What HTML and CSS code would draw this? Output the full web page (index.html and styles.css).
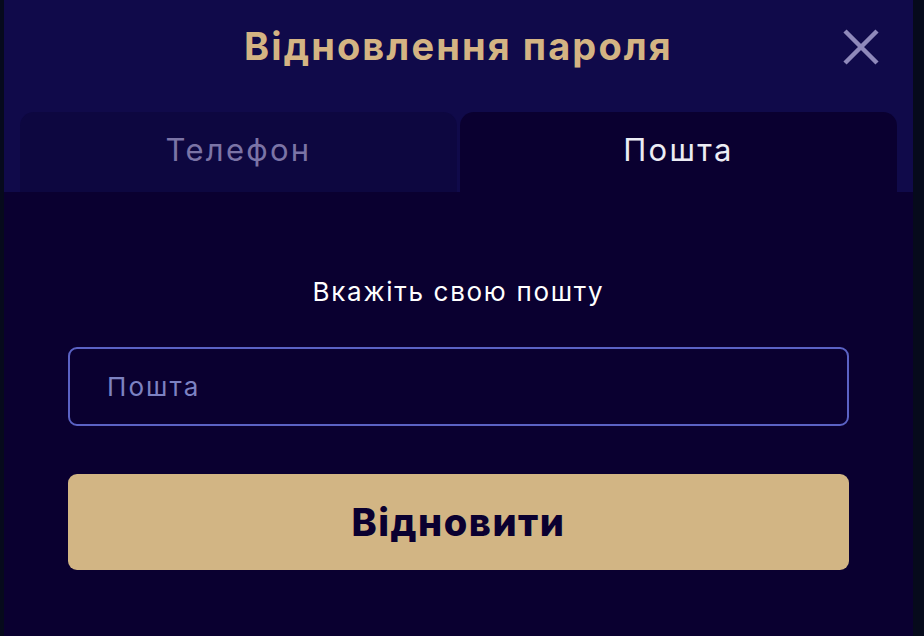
FILE: index.html
```html
<!DOCTYPE html>
<html lang="uk">
<head>
<meta charset="utf-8">
<link rel="stylesheet" href="styles.css">
</head>
<body>
<div class="page">
  <div class="modal">
    <div class="head">
      <div class="title-row">
        <h1 class="title">Відновлення пароля</h1>
        <button class="close" aria-label="close">
          <svg width="36" height="36" viewBox="0 0 36 36"><path d="M2 2 L34 34 M34 2 L2 34" stroke="#8f89ba" stroke-width="4.5" stroke-linecap="butt"/></svg>
        </button>
      </div>
      <div class="tabs">
        <div class="tab">Телефон</div>
        <div class="tab active">Пошта</div>
      </div>
    </div>
    <div class="body">
      <p class="hint">Вкажіть свою пошту</p>
      <div class="input"><span class="placeholder">Пошта</span></div>
      <button class="submit">Відновити</button>
    </div>
  </div>
</div>
</body>
</html>
```
FILE: styles.css
```css
* { box-sizing: border-box; }
html, body { margin: 0; padding: 0; }
body {
  background: #060a1c;
  font-family: Inter, "Noto Sans", sans-serif;
  width: 924px;
  height: 636px;
  overflow: hidden;
}
.page {
  padding-left: 4px;
  height: 636px;
}
.modal {
  width: 909px;
  height: 636px;
  display: flex;
  flex-direction: column;
}
.head {
  background: #100a4a;
  padding: 0 16px;
}
.title-row {
  height: 112px;
  padding-bottom: 20px;
  display: flex;
  align-items: center;
  justify-content: center;
  position: relative;
}
.title {
  margin: 0;
  font-size: 38px;
  font-weight: 700;
  color: #d4b483;
  letter-spacing: 2.1px;
}
.close {
  position: absolute;
  right: 18px;
  top: 29px;
  width: 36px;
  height: 36px;
  padding: 0;
  border: 0;
  background: none;
}
.close svg { display: block; }
.tabs {
  display: flex;
  gap: 3px;
  height: 80px;
}
.tab {
  flex: 1;
  background: #0d0740;
  border-radius: 14px 14px 0 0;
  display: flex;
  align-items: center;
  justify-content: center;
  padding-bottom: 6px;
  font-size: 31px;
  letter-spacing: 2.3px;
  color: #7b74a6;
}
.tab.active {
  background: #0a0030;
  color: #ececf4;
}
.body {
  flex: 1;
  background: #0a0030;
  padding: 0 64px;
  display: flex;
  flex-direction: column;
}
.hint {
  margin: 82px 0 0;
  text-align: center;
  color: #ffffff;
  font-size: 26px;
  letter-spacing: 1.7px;
  line-height: 36px;
}
.input {
  margin-top: 37px;
  height: 79px;
  border: 2px solid #5b62c4;
  border-radius: 9px;
  display: flex;
  align-items: center;
  padding-left: 37px;
}
.placeholder {
  color: #7d82c2;
  font-size: 26px;
  letter-spacing: 2.1px;
}
.submit {
  margin-top: 48px;
  height: 96px;
  border: 0;
  border-radius: 9px;
  background: #d2b584;
  color: #0a0030;
  font-family: Inter, "Noto Sans", sans-serif;
  font-size: 38px;
  font-weight: 800;
  letter-spacing: 1.5px;
  padding: 0;
}
```
